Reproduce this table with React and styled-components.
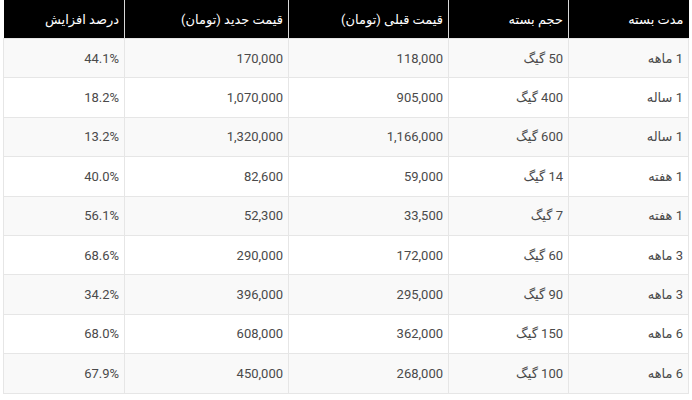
import React from 'react';
import styled, { createGlobalStyle } from 'styled-components';

const GlobalStyle = createGlobalStyle`
	html, body {
		margin: 0;
		padding: 0;
		background: #fff;
	}
	body {
		font-family: Roboto, "DejaVu Sans", sans-serif;
	}
`;

const columns = [
	{ title: 'مدت بسته', width: 120 },
	{ title: 'حجم بسته', width: 120 },
	{ title: 'قیمت قبلی (تومان)', width: 160 },
	{ title: 'قیمت جدید (تومان)', width: 164 },
	{ title: 'درصد افزایش', width: 121 }
];

const rows = [
	['1 ماهه', '50 گیگ', '118,000', '170,000', '44.1%'],
	['1 ساله', '400 گیگ', '905,000', '1,070,000', '18.2%'],
	['1 ساله', '600 گیگ', '1,166,000', '1,320,000', '13.2%'],
	['1 هفته', '14 گیگ', '59,000', '82,600', '40.0%'],
	['1 هفته', '7 گیگ', '33,500', '52,300', '56.1%'],
	['3 ماهه', '60 گیگ', '172,000', '290,000', '68.6%'],
	['3 ماهه', '90 گیگ', '295,000', '396,000', '34.2%'],
	['6 ماهه', '150 گیگ', '362,000', '608,000', '68.0%'],
	['6 ماهه', '100 گیگ', '268,000', '450,000', '67.9%']
];

export default function App() {
	return (
		<>
			<GlobalStyle />
			<Wrapper>
				<PriceTable>
					<colgroup>
						{columns.map((col) => (
							<col key={col.title} style={{ width: col.width }} />
						))}
					</colgroup>
					<thead>
						<tr>
							{columns.map((col) => (
								<HeadCell key={col.title}>{col.title}</HeadCell>
							))}
						</tr>
					</thead>
					<tbody>
						{rows.map((row, i) => (
							<Row key={i} striped={i % 2 === 0 ? 1 : 0}>
								{row.map((value, j) => (
									<Cell key={j}>{value}</Cell>
								))}
							</Row>
						))}
					</tbody>
				</PriceTable>
			</Wrapper>
		</>
	);
}

const Wrapper = styled.div`
	padding: 0 3px 0 4px;
	direction: rtl;
`;
const PriceTable = styled.table`
	width: 685px;
	border-collapse: collapse;
	table-layout: fixed;
	font-size: 13px;
	color: #4a4a4a;
`;
const HeadCell = styled.th`
	height: 38px;
	padding: 0 5px;
	background: #000;
	color: #fff;
	font-weight: 400;
	text-align: right;
	border-left: 1px solid #d8d8d8;
	&:last-child {
		border-left: none;
	}
`;
const Row = styled.tr`
	background: ${(p) => (p.striped ? '#f9f9f9' : '#fff')};
`;
const Cell = styled.td`
	height: 38.4px;
	padding: 0 5px;
	text-align: right;
	border: 1px solid #e6e6e6;
`;
